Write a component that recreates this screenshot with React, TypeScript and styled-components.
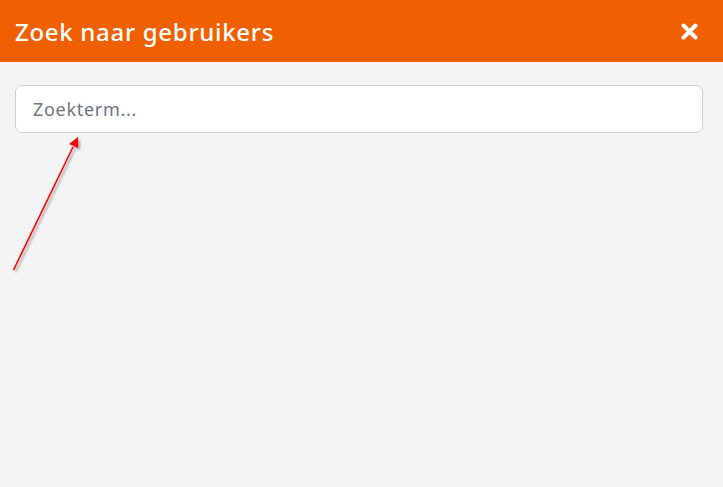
import React from "react";
import styled, { createGlobalStyle } from "styled-components";

const Global = createGlobalStyle`
  html, body { margin: 0; padding: 0; background: #f4f4f4; }
  body { font-family: "Open Sans", "Liberation Sans", sans-serif; }
  * { box-sizing: border-box; }
`;

const Page = styled.div`
  position: relative;
  width: 723px;
  height: 487px;
  background: #f4f4f4;
  display: flex;
  flex-direction: column;
`;

const Header = styled.header`
  height: 62px;
  background: #f06000;
  display: flex;
  align-items: center;
  justify-content: space-between;
  padding: 0 24px 0 15px;
`;

const Title = styled.h1`
  margin: 0;
  color: #ffffff;
  font-family: "Noto Sans", "Open Sans", sans-serif;
  font-weight: 500;
  font-size: 24px;
  letter-spacing: 0.7px;
`;

const CloseButton = styled.button`
  border: 0;
  background: transparent;
  padding: 0;
  width: 20px;
  height: 20px;
  display: flex;
  align-items: center;
  justify-content: center;
  cursor: pointer;
`;

const Body = styled.main`
  padding: 23px 20px 0 15px;
`;

const SearchInput = styled.input`
  width: 100%;
  height: 48px;
  border: 1px solid #cfd0d6;
  border-radius: 7px;
  background: #ffffff;
  padding: 0 17px;
  font-family: "Noto Sans", "Open Sans", sans-serif;
  font-size: 18px;
  letter-spacing: 0.7px;
  color: #333;
  outline: none;
  &::placeholder { color: #6f7480; }
`;

const Annotation = styled.svg`
  position: absolute;
  left: 0;
  top: 0;
  pointer-events: none;
`;

export default function App() {
  return (
    <Page>
      <Global />
      <Header>
        <Title>Zoek naar gebruikers</Title>
        <CloseButton aria-label="Sluiten">
          <svg width="17" height="17" viewBox="0 0 17 17">
            <path d="M2.5 2.5 L14.5 14.5 M14.5 2.5 L2.5 14.5" stroke="#fff" strokeWidth="4" strokeLinecap="round" />
          </svg>
        </CloseButton>
      </Header>
      <Body>
        <SearchInput placeholder="Zoekterm..." />
      </Body>
      <Annotation width="723" height="487">
        <defs>
          <filter id="sh" x="-50%" y="-50%" width="200%" height="200%">
            <feDropShadow dx="2" dy="2" stdDeviation="1.2" floodColor="#000" floodOpacity="0.35" />
          </filter>
        </defs>
        <g filter="url(#sh)">
          <line x1="13.5" y1="270" x2="73" y2="147" stroke="#ff0000" strokeWidth="1.6" />
          <polygon points="78,137 78,148 69,144" fill="#ff0000" />
        </g>
      </Annotation>
    </Page>
  );
}
